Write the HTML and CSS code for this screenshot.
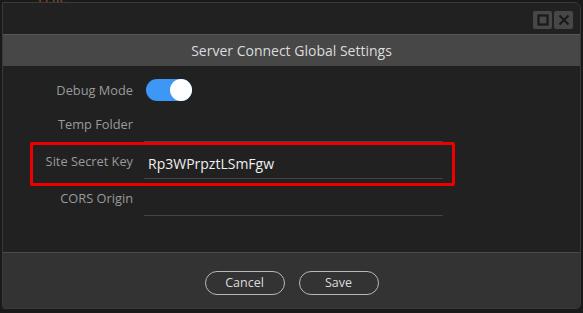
FILE: index.html
```html
<!DOCTYPE html>
<html>
<head>
    <title>Server Connect Global Settings</title>
    <link rel="stylesheet" href="styles.css">
</head>
<body>
    <div class="backdrop-text">True</div>
    <div class="window">
        <div class="titlebar">
            <button class="win-btn" title="Maximize">
                <svg width="12" height="12" viewBox="0 0 12 12"><rect x="1.5" y="1.5" width="9" height="9" fill="none" stroke="#1a1a1a" stroke-width="2.2"/></svg>
            </button>
            <button class="win-btn" title="Close">
                <svg width="12" height="12" viewBox="0 0 12 12"><path d="M1.5 1.5 L10.5 10.5 M10.5 1.5 L1.5 10.5" stroke="#1a1a1a" stroke-width="2.2"/></svg>
            </button>
        </div>
        <div class="header">Server Connect Global Settings</div>
        <div class="settings">
            <div class="row row-toggle">
                <label>Debug Mode</label>
                <div class="toggle on"><span class="knob"></span></div>
            </div>
            <div class="row">
                <label>Temp Folder</label>
                <div class="field"></div>
            </div>
            <div class="row highlighted">
                <label>Site Secret Key</label>
                <div class="field value">Rp3WPrpztLSmFgw</div>
            </div>
            <div class="row">
                <label>CORS Origin</label>
                <div class="field"></div>
            </div>
        </div>
        <div class="footer">
            <button class="pill">Cancel</button>
            <button class="pill">Save</button>
        </div>
    </div>
</body>
</html>
```

FILE: styles.css
```css
body {
    margin: 0;
    padding: 2px 2px 2px 2px;
    background-color: #1a1a1a;
    font-family: 'Open Sans', 'Noto Sans', sans-serif;
    overflow: hidden;
}
.backdrop-text {
    position: absolute;
    left: 36px;
    top: -9px;
    color: #8a4f28;
    font-size: 13px;
    font-family: 'DejaVu Sans Mono', monospace;
}
.window {
    position: relative;
    height: 307px;
    box-sizing: border-box;
    border: 1px solid #3a3a3a;
    border-radius: 0 7px 5px 3px;
    overflow: hidden;
    background-color: #212121;
    display: flex;
    flex-direction: column;
}
.titlebar {
    height: 31px;
    display: flex;
    justify-content: flex-end;
    align-items: center;
    gap: 2px;
    padding: 2px 7px 0 0;
    box-sizing: border-box;
    background-color: #212121;
}
.win-btn {
    width: 19px;
    height: 18px;
    padding: 0;
    border: none;
    border-radius: 2px;
    background-color: #474747;
    display: flex;
    align-items: center;
    justify-content: center;
}
.header {
    height: 32px;
    background-color: #474747;
    border-top: 1px solid #555;
    box-sizing: border-box;
    display: flex;
    align-items: center;
    justify-content: center;
    color: #dcdcdc;
    font-size: 14px;
}
.settings {
    flex: 1;
    background-color: #212121;
}
.row {
    display: grid;
    grid-template-columns: 130px 299px;
    column-gap: 11px;
    align-items: center;
    width: 440px;
    height: 37px;
    position: relative;
}
.row label {
    text-align: right;
    color: #9a9a9a;
    font-size: 12.8px;
}
.row-toggle {
    height: 39px;
    padding-top: 8px;
    box-sizing: border-box;
}
.field {
    height: 37px;
    box-sizing: border-box;
    border-bottom: 1px solid #444;
}
.value {
    color: #f0f0f0;
    font-size: 14px;
    padding: 12px 0 0 4px;
}
.highlighted::after {
    content: '';
    position: absolute;
    left: 27px;
    right: -12px;
    top: 0;
    bottom: -7px;
    border: 3px solid #ee0000;
    border-radius: 2px;
}
.toggle {
    width: 46px;
    height: 22px;
    border-radius: 11px;
    background-color: #3d97f5;
    display: flex;
    justify-content: flex-end;
    margin-left: 2px;
}
.toggle .knob {
    width: 22px;
    height: 22px;
    border-radius: 50%;
    background-color: #fff;
}
.footer {
    height: 56px;
    background-color: #333;
    border-top: 1px solid #4a4a4a;
    box-sizing: border-box;
    display: flex;
    justify-content: center;
    align-items: center;
    gap: 14px;
    padding-top: 4px;
}
.pill {
    width: 80px;
    height: 24px;
    border: 1px solid #b8b8b8;
    border-radius: 12px;
    background-color: transparent;
    color: #dcdcdc;
    font-family: 'Open Sans', 'Noto Sans', sans-serif;
    font-size: 12.5px;
    padding: 0;
}
```
